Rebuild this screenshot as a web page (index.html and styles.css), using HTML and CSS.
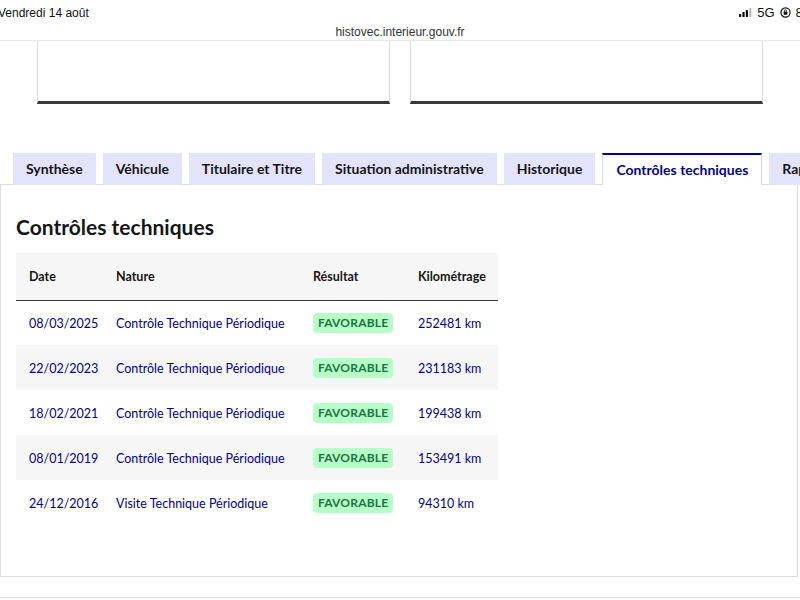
FILE: index.html
```html
<!DOCTYPE html>
<html lang="fr">
<head>
    <meta charset="UTF-8">
    <meta name="viewport" content="width=device-width, initial-scale=1.0">
    <title>HistoVec - Contrôles techniques</title>
    <link rel="stylesheet" href="styles.css">
</head>
<body>
    <div class="statusbar">
        <span class="date">Vendredi 14 août</span>
        <span class="sys">
            <svg class="signal" width="13" height="9" viewBox="0 0 13 9">
                <rect x="0" y="6" width="2.2" height="3" rx=".5" fill="#111"/>
                <rect x="3.4" y="4" width="2.2" height="5" rx=".5" fill="#111"/>
                <rect x="6.8" y="2" width="2.2" height="7" rx=".5" fill="#111"/>
                <rect x="10.2" y="0" width="2.2" height="9" rx=".5" fill="#bbb"/>
            </svg>
            <span>5G</span>
            <svg class="lock" width="11" height="11" viewBox="0 0 11 11">
                <circle cx="5.5" cy="5.5" r="4.6" fill="none" stroke="#111" stroke-width="1.2"/>
                <rect x="3.7" y="4.8" width="3.6" height="3" rx=".4" fill="#111"/>
                <path d="M4.4 4.9 V4 a1.1 1.1 0 0 1 2.2 0 V4.9" fill="none" stroke="#111" stroke-width=".9"/>
            </svg>
            <span>83</span>
        </span>
    </div>
    <div class="urlbar">histovec.interieur.gouv.fr</div>

    <div class="cards">
        <div class="card"></div>
        <div class="card"></div>
    </div>

    <ul class="tabs">
        <li class="tab">Synthèse</li>
        <li class="tab">Véhicule</li>
        <li class="tab">Titulaire et Titre</li>
        <li class="tab">Situation administrative</li>
        <li class="tab">Historique</li>
        <li class="tab active">Contrôles techniques</li>
        <li class="tab">Rapport</li>
    </ul>

    <div class="panel">
        <h2 class="title">Contrôles techniques</h2>
        <table class="ct">
            <thead>
                <tr>
                    <th class="c-date">Date</th>
                    <th class="c-nature">Nature</th>
                    <th class="c-res">Résultat</th>
                    <th>Kilométrage</th>
                </tr>
            </thead>
            <tbody>
                <tr>
                    <td>08/03/2025</td>
                    <td>Contrôle Technique Périodique</td>
                    <td><span class="badge">FAVORABLE</span></td>
                    <td>252481 km</td>
                </tr>
                <tr>
                    <td>22/02/2023</td>
                    <td>Contrôle Technique Périodique</td>
                    <td><span class="badge">FAVORABLE</span></td>
                    <td>231183 km</td>
                </tr>
                <tr>
                    <td>18/02/2021</td>
                    <td>Contrôle Technique Périodique</td>
                    <td><span class="badge">FAVORABLE</span></td>
                    <td>199438 km</td>
                </tr>
                <tr>
                    <td>08/01/2019</td>
                    <td>Contrôle Technique Périodique</td>
                    <td><span class="badge">FAVORABLE</span></td>
                    <td>153491 km</td>
                </tr>
                <tr>
                    <td>24/12/2016</td>
                    <td>Visite Technique Périodique</td>
                    <td><span class="badge">FAVORABLE</span></td>
                    <td>94310 km</td>
                </tr>
            </tbody>
        </table>
    </div>
    <div class="next"></div>
</body>
</html>
```

FILE: styles.css
```css
*{
    box-sizing: border-box;
}
html, body{
    margin: 0;
    padding: 0;
    background-color: #fff;
    overflow: hidden;
}
body{
    width: 800px;
    height: 600px;
    font-family: Lato, "Noto Sans", sans-serif;
    color: #161616;
}

/* barre iOS */
.statusbar{
    height: 22px;
    padding-top: 3px;
    display: flex;
    justify-content: space-between;
    align-items: center;
    font-family: "Liberation Sans", Arial, sans-serif;
    font-size: 12px;
    color: #111;
    overflow: hidden;
}
.date{
    margin-left: -2px;
}
.sys{
    display: flex;
    align-items: center;
    gap: 5px;
    margin-right: -10px;
    font-size: 13px;
}
.urlbar{
    height: 19px;
    padding-top: 3px;
    text-align: center;
    font-family: "Liberation Sans", Arial, sans-serif;
    font-size: 12px;
    color: #333;
    border-bottom: 1px solid #e6e6e6;
}

/* cartes du haut */
.cards{
    display: grid;
    grid-template-columns: 1fr 1fr;
    gap: 20px;
    padding: 0 37px;
}
.card{
    height: 63px;
    border-left: 1px solid #dddddd;
    border-right: 1px solid #dddddd;
    border-bottom: 3px solid #3a3a3a;
}

/* onglets */
.tabs{
    list-style: none;
    margin: 49px 0 0 0;
    padding: 0 0 0 13px;
    display: flex;
    gap: 7px;
    white-space: nowrap;
    box-shadow: inset 0 -1px 0 #dddddd;
}
.tab{
    flex: none;
    height: 32px;
    line-height: 32px;
    padding: 0 13px;
    background-color: #e3e3fd;
    font-size: 14px;
    font-weight: bold;
    color: #161616;
}
.tab.active{
    background-color: #fff;
    color: #000091;
    border-top: 2px solid #000091;
    line-height: 30px;
    border-left: 1px solid #dddddd;
    border-right: 1px solid #dddddd;
    padding: 0 13px;
}

.panel{
    margin: 0 2px 0 0;
    height: 392px;
    border-left: 1px solid #dddddd;
    border-right: 1px solid #dddddd;
    border-bottom: 1px solid #dddddd;
    padding: 28px 15px 0 15px;
}
.title{
    margin: 0 0 12px 0;
    font-size: 21px;
    line-height: 28px;
    font-weight: bold;
}

/* tableau */
.ct{
    border-collapse: collapse;
    table-layout: fixed;
    width: 482px;
    font-size: 12.5px;
}
.ct th{
    text-align: left;
    height: 47px;
    background-color: #f6f6f6;
    border-bottom: 1px solid #3a3a3a;
    font-weight: bold;
    padding: 0 0 0 13px;
}
.ct td{
    height: 45px;
    padding: 1px 0 0 13px;
    color: #000091;
    white-space: nowrap;
}
.ct tbody tr:nth-child(even){
    background-color: #f6f6f6;
}
.c-date{ width: 87px; }
.c-nature{ width: 197px; }
.c-res{ width: 105px; }

.badge{
    display: inline-block;
    padding: 0 5px;
    height: 20px;
    line-height: 20px;
    border-radius: 4px;
    background-color: #b8fec9;
    color: #18753c;
    font-weight: bold;
    font-size: 12px;
    letter-spacing: .2px;
}

.next{
    margin-top: 20px;
    border-top: 1px solid #dddddd;
}
```
